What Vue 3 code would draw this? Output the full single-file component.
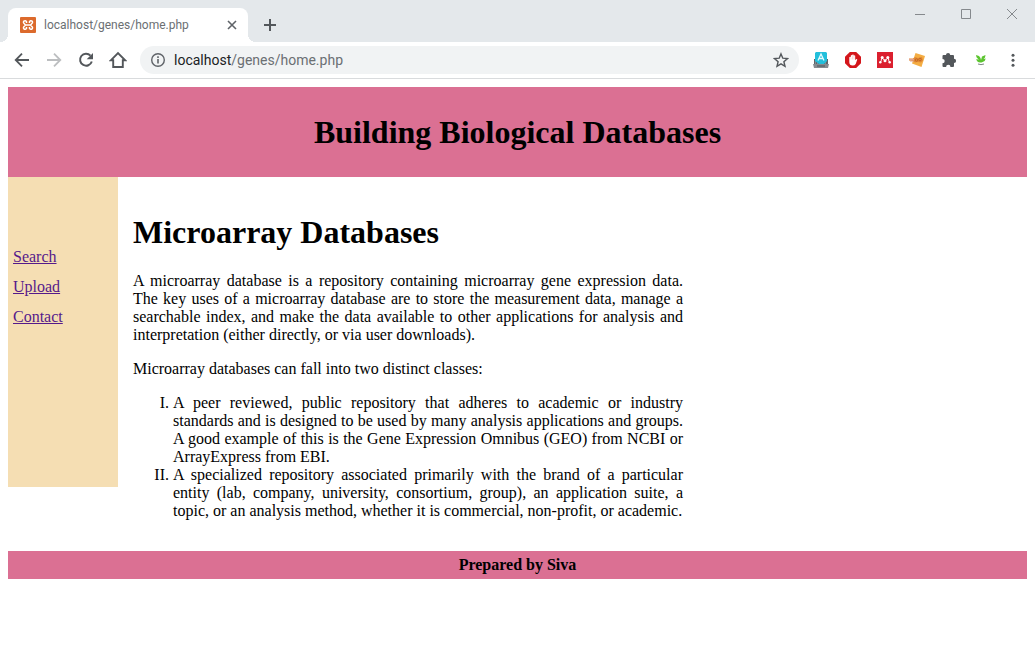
<script setup>
const links = ['Search', 'Upload', 'Contact']
</script>

<template>
  <div class="browser">
    <div class="titlebar">
      <div class="tab">
        <svg class="favicon" width="16" height="16" viewBox="0 0 16 16" aria-hidden="true">
          <rect width="16" height="16" rx="1" fill="#dc6a2c" />
          <path d="M6.500 6V4.600a1.600 1.600 0 1 0-2.200 2.100L5.500 8 4.300 9.300a1.600 1.600 0 1 0 2.200 2.100V10M9.500 6V4.600a1.600 1.600 0 1 1 2.200 2.100L10.500 8l1.200 1.300a1.600 1.600 0 1 1-2.200 2.100V10M6 8h4" fill="none" stroke="#fff" stroke-width="1.500" stroke-linejoin="round" />
        </svg>
        <span class="tab-title">localhost/genes/home.php</span>
        <button class="icon-btn tab-close" aria-label="Close tab">
          <svg width="16" height="16" viewBox="0 0 16 16"><path d="M4 4l8 8M12 4l-8 8" fill="none" stroke="#5f6368" stroke-width="1.600" /></svg>
        </button>
      </div>
      <button class="icon-btn new-tab" aria-label="New tab">
        <svg width="16" height="16" viewBox="0 0 16 16"><path d="M8 2v12M2 8h12" fill="none" stroke="#53575b" stroke-width="2" /></svg>
      </button>
      <div class="window-controls">
        <button class="icon-btn" aria-label="Minimize"><svg width="12" height="12" viewBox="0 0 12 12"><path d="M1 6.500h10" stroke="#85898d" /></svg></button>
        <button class="icon-btn" aria-label="Maximize"><svg width="12" height="12" viewBox="0 0 12 12"><path d="M1.500 1.500h9v9h-9z" fill="none" stroke="#85898d" /></svg></button>
        <button class="icon-btn" aria-label="Close"><svg width="12" height="12" viewBox="0 0 12 12"><path d="M1 1l10 10M11 1L1 11" stroke="#85898d" /></svg></button>
      </div>
    </div>

    <div class="toolbar">
      <div class="nav">
        <button class="icon-btn" aria-label="Back"><svg width="16" height="16" viewBox="0 0 16 16"><path d="M15 8H2M8 1.700L1.700 8 8 14.300" fill="none" stroke="#53575b" stroke-width="1.800" /></svg></button>
        <button class="icon-btn" aria-label="Forward"><svg width="16" height="16" viewBox="0 0 16 16"><path d="M1 8h13M8 1.700L14.300 8 8 14.300" fill="none" stroke="#bcbec0" stroke-width="1.800" /></svg></button>
        <button class="icon-btn" aria-label="Reload"><svg width="16" height="16" viewBox="0 0 16 16"><path d="M12.500 3.600A6 6 0 1 0 13.800 9.500" fill="none" stroke="#53575b" stroke-width="2" /><path d="M15 1v6.300H8.700z" fill="#53575b" /></svg></button>
        <button class="icon-btn" aria-label="Home"><svg width="18" height="18" viewBox="0 0 18 18"><path d="M1.800 9.300L9 2l7.200 7.300h-2.400V16H4.200V9.300z" fill="none" stroke="#53575b" stroke-width="1.900" /></svg></button>
      </div>
      <div class="address">
        <svg width="16" height="16" viewBox="0 0 16 16" aria-hidden="true"><circle cx="8" cy="8" r="6.300" fill="none" stroke="#5f6368" stroke-width="1.400" /><path d="M8 7v4.500M8 4.300v1.700" stroke="#5f6368" stroke-width="1.600" /></svg>
        <span class="url"><b>localhost</b>/genes/home.php</span>
        <button class="icon-btn" aria-label="Bookmark this page"><svg width="16" height="16" viewBox="0 0 16 16"><path d="M8 1.900l1.800 4.300 4.700.4-3.600 3.100 1.100 4.600L8 11.800l-4 2.500 1.100-4.600-3.600-3.100 4.700-.4z" fill="none" stroke="#53575b" stroke-width="1.400" /></svg></button>
      </div>
      <div class="extensions">
        <button class="icon-btn" aria-label="Typing assistant"><svg width="16" height="16" viewBox="0 0 16 16">
          <path d="M1 7h14v6H1z" fill="#5d666c" /><path d="M0 12h16l-1 4H1z" fill="#858b90" />
          <path d="M2 9h2M12 9h2M2 11h12" stroke="#aab0b4" stroke-dasharray="1 1" /><path d="M4 14h8" stroke="#4d555a" />
          <path d="M3 0h10l1 1v8l-3 3H6L2 9V1z" fill="#23bfdb" /><path d="M5 8.500L8 2l3 6.500M6.200 6.500h3.600" fill="none" stroke="#e5fbff" stroke-width="1.300" />
        </svg></button>
        <button class="icon-btn" aria-label="Ad blocker"><svg width="16" height="16" viewBox="0 0 16 16">
          <path d="M4.800 0h6.400L16 4.800v6.400L11.200 16H4.800L0 11.200V4.800z" fill="#d4161b" />
          <path d="M4.300 8V5.200q.8-.8 1.500 0V3.500q.7-.8 1.400 0v-.7q.8-.8 1.500 0v.9q.8-.7 1.500 0v4.500l.8-1q1-.4 1.300.3L10.700 12q-1 1.500-3 1.500-3.400 0-3.400-3.500z" fill="#fff" />
          <path d="M6 5.500v2M7.500 4v3.500M9 4v3.500" stroke="#ef9c9e" stroke-width=".4" />
        </svg></button>
        <button class="icon-btn" aria-label="Reference manager"><svg width="16" height="16" viewBox="0 0 16 16">
          <path d="M0 0h16v16H0z" fill="#db202f" />
          <path d="M3.300 10.500Q4.500 9 4.500 6.500M12.700 10.500Q11.500 9 11.500 6.500M5 6l3 2.500L11 6" fill="none" stroke="#fff" stroke-width="1" />
          <circle cx="5.200" cy="5.600" r="1.500" fill="#fff" /><circle cx="10.800" cy="5.600" r="1.500" fill="#fff" /><circle cx="3.300" cy="10.200" r="1.200" fill="#fff" /><circle cx="8" cy="8.700" r="1.500" fill="#fff" /><circle cx="12.700" cy="10.200" r="1.200" fill="#fff" />
        </svg></button>
        <button class="icon-btn" aria-label="Page tools"><svg width="16" height="16" viewBox="0 0 16 16">
          <path d="M6.500 1L16 4l-3.500 11L3 11.500l1-3z" fill="#f4ad43" />
          <path d="M0 6.500h4l2-1.500 3 1 4-1 1 3.500-2 2-3-.5-3 .5-2-1.500-4-.5z" fill="#e28a35" />
          <path d="M0 7.500h5M1 9h4" stroke="#e0a090" /><circle cx="7.500" cy="8" r="1.300" fill="none" stroke="#bd611e" stroke-width=".8" /><circle cx="11" cy="7.500" r="1.300" fill="none" stroke="#bd611e" stroke-width=".8" />
        </svg></button>
        <button class="icon-btn" aria-label="Extensions"><svg width="16" height="16" viewBox="0 0 16 16"><path d="M5 3a2.100 2.100 0 0 1 4.200 0H12q1 0 1 1v2.800a2.100 2.100 0 0 1 0 4.200v3q0 1-1 1H9.500a2.200 2.200 0 0 0-4.400 0H2.500q-1 0-1-1v-2.700a2.200 2.200 0 0 0 0-4.400V4q0-1 1-1z" fill="#53575b" /></svg></button>
        <button class="icon-btn" aria-label="Plant extension"><svg width="16" height="16" viewBox="0 0 16 16">
          <path d="M7.300 10.500C5 10.300 3.300 9 3.300 7l2.500.8L3.500 5.200 3 3l3 1 1.500 2L8 8l1-3.500L12.500 3l-.5 2.500-1.500 1.500 2.200-.4-1 2.400-3.200 1.500z" fill="#5cc52f" /><path d="M5 12q3 1.300 6 0" fill="none" stroke="#7e8985" />
        </svg></button>
        <button class="icon-btn" aria-label="Menu"><svg width="16" height="16" viewBox="0 0 16 16" fill="#53575b"><circle cx="8" cy="3.200" r="1.500" /><circle cx="8" cy="8.200" r="1.500" /><circle cx="8" cy="13.200" r="1.500" /></svg></button>
      </div>
    </div>

    <div class="page">
      <header class="banner"><h1>Building Biological Databases</h1></header>
      <div class="content">
        <nav class="sidebar">
          <a v-for="link in links" :key="link" href="#">{{ link }}</a>
        </nav>
        <main class="article">
          <h1>Microarray Databases</h1>
          <p>A microarray database is a repository containing microarray gene expression data. The key uses of a microarray database are to store the measurement data, manage a searchable index, and make the data available to other applications for analysis and interpretation (either directly, or via user downloads).</p>
          <p>Microarray databases can fall into two distinct classes:</p>
          <ol>
            <li>A peer reviewed, public repository that adheres to academic or industry standards and is designed to be used by many analysis applications and groups. A good example of this is the Gene Expression Omnibus (GEO) from NCBI or ArrayExpress from EBI.</li>
            <li>A specialized repository associated primarily with the brand of a particular entity (lab, company, university, consortium, group), an application suite, a topic, or an analysis method, whether it is commercial, non-profit, or academic.</li>
          </ol>
        </main>
      </div>
      <footer class="footer">Prepared by Siva</footer>
    </div>
  </div>
</template>

<style>
body {
  background: #fff;
}
</style>

<style scoped>
.browser {
  font-family: Roboto, "Noto Sans", sans-serif;
}
.icon-btn {
  display: flex;
  align-items: center;
  justify-content: center;
  width: 16px;
  height: 16px;
  padding: 0;
  border: 0;
  background: none;
  flex: none;
}
.icon-btn svg {
  flex: none;
}
.titlebar {
  display: flex;
  align-items: flex-end;
  height: 42px;
  padding: 0 8px;
  background: #e4e8eb;
}
.tab {
  position: relative;
  display: flex;
  align-items: center;
  gap: 8px;
  box-sizing: border-box;
  width: 240px;
  height: 34px;
  padding: 0 8px 0 12px;
  border-radius: 8px 8px 0 0;
  background: #fff;
}
.tab::before,
.tab::after {
  content: "";
  position: absolute;
  bottom: 0;
  width: 8px;
  height: 8px;
}
.tab::before {
  left: -8px;
  background: radial-gradient(circle at 0 0, transparent 8px, #fff 8px);
}
.tab::after {
  right: -8px;
  background: radial-gradient(circle at 100% 0, transparent 8px, #fff 8px);
}
.tab-title {
  flex: 1;
  color: #6b6f73;
  font-size: 12px;
  line-height: 16px;
  white-space: nowrap;
}
.new-tab {
  margin: 0 0 9px 14px;
}
.window-controls {
  display: flex;
  gap: 30px;
  align-self: flex-start;
  margin: 6px 7px 0 auto;
}
.toolbar {
  display: flex;
  align-items: center;
  height: 36px;
  padding: 0 14px;
  border-bottom: 1px solid #d9dbdd;
  background: #fff;
}
.nav,
.extensions {
  display: flex;
  gap: 16px;
}
.address {
  display: flex;
  flex: 1;
  align-items: center;
  gap: 8px;
  height: 28px;
  margin: 0 14px;
  padding: 0 10px;
  border-radius: 14px;
  background: #f1f3f4;
}
.url {
  flex: 1;
  color: #6b6f73;
  font-size: 14px;
  line-height: 20px;
}
.url b {
  color: #202124;
  font-weight: 400;
}
.page {
  padding: 8px;
  font-family: "Liberation Serif", "Times New Roman", serif;
  font-size: 16px;
  line-height: 18px;
  color: #000;
}
h1 {
  margin: 0;
  font-size: 32px;
  line-height: 36px;
}
.banner {
  padding: 27px 5px;
  background: #db7093;
  text-align: center;
}
.content {
  display: flex;
  align-items: flex-start;
}
.sidebar {
  display: flex;
  flex-direction: column;
  align-items: flex-start;
  box-sizing: border-box;
  width: 110px;
  min-height: 310px;
  padding: 65px 5px 5px;
  background: #f5deb3;
  line-height: 30px;
}
.sidebar a {
  color: #551a8b;
}
.article {
  max-width: 550px;
  padding: 37px 15px 31px;
  text-align: justify;
}
.article h1 {
  margin-bottom: 22px;
}
p {
  margin: 0 0 16px;
}
ol {
  margin: 0;
  padding-left: 40px;
  list-style: upper-roman;
}
.footer {
  padding: 5px;
  background: #db7093;
  font-weight: 700;
  text-align: center;
}
</style>
